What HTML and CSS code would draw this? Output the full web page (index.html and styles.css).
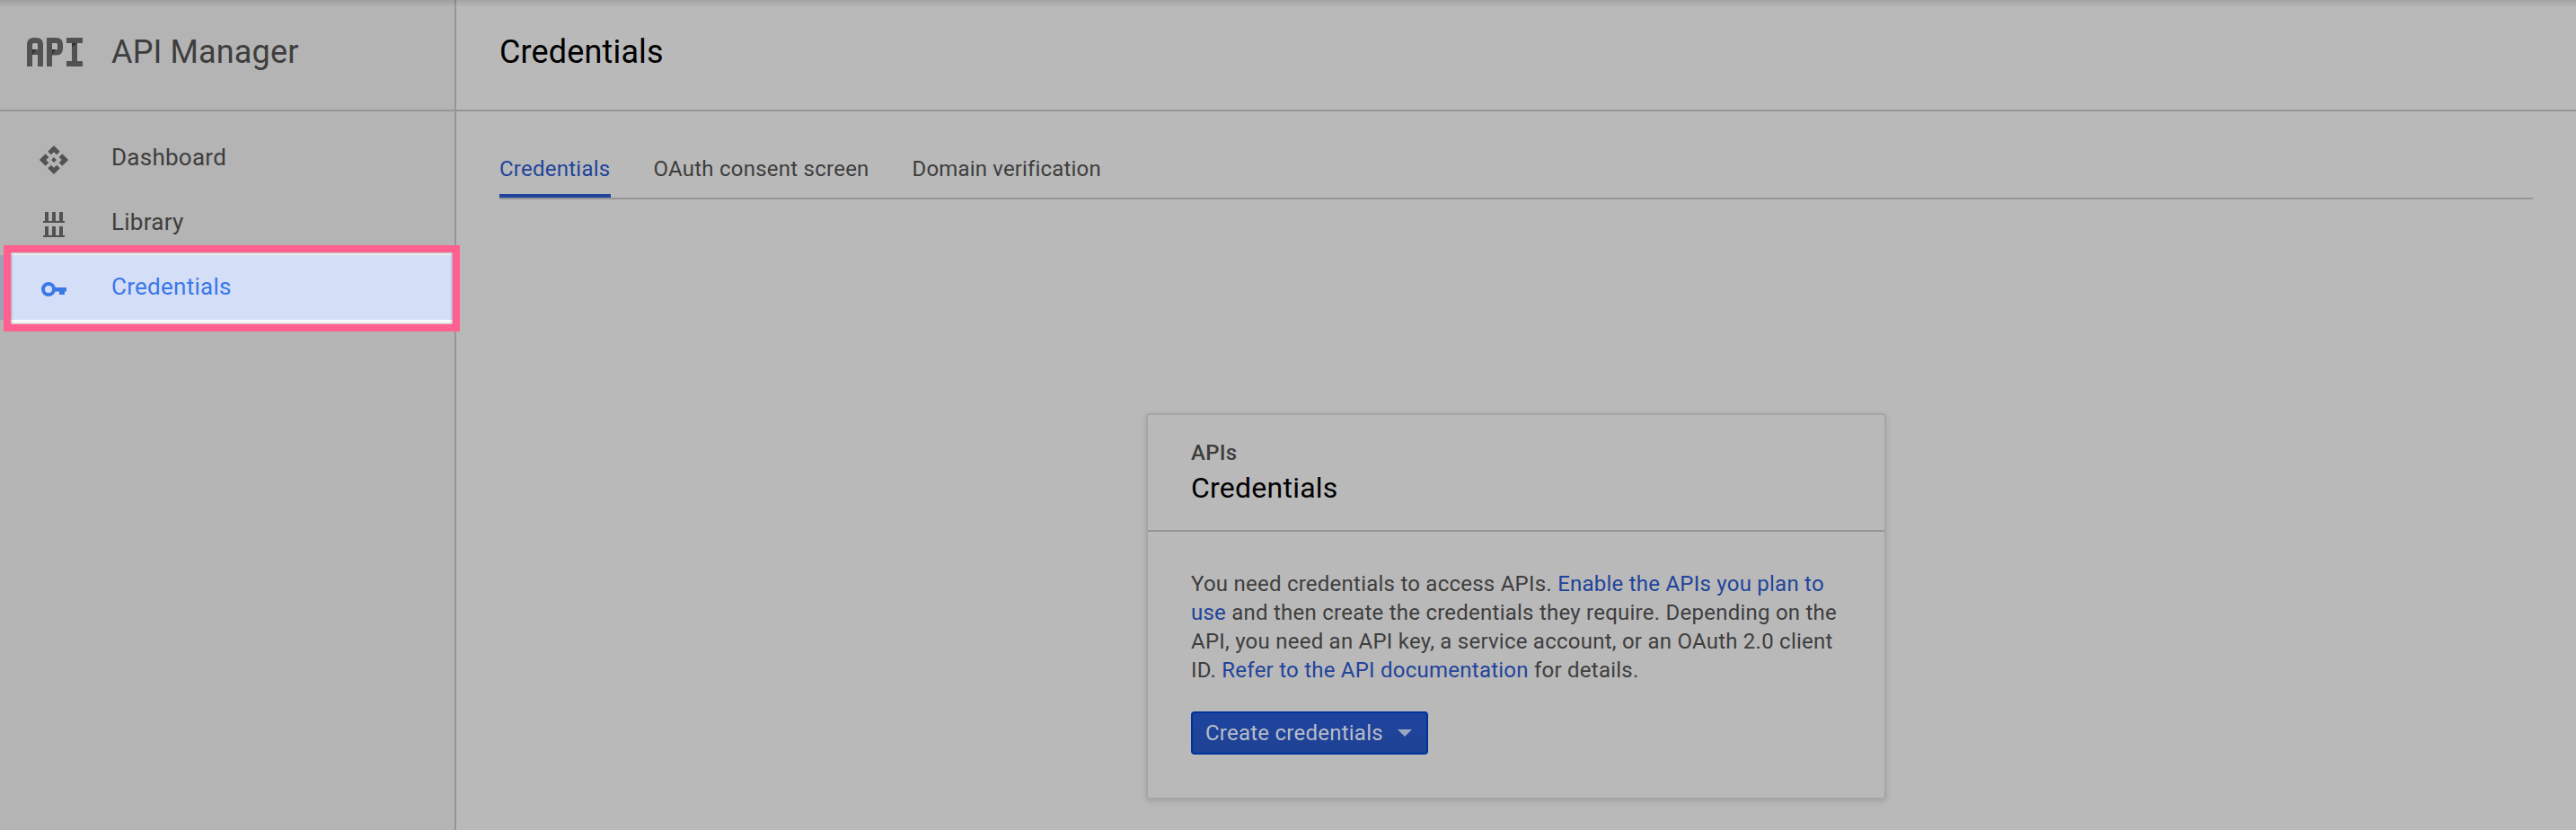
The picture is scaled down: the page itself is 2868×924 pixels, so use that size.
FILE: index.html
```html
<!DOCTYPE html>
<html lang="en">
<head>
<meta charset="utf-8">
<title>API Manager</title>
<link rel="stylesheet" href="styles.css">
</head>
<body>
<div class="app">
  <aside class="sidebar">
    <div class="brand">
      <svg class="brand-logo" width="64" height="34" viewBox="0 0 64 34" aria-hidden="true">
        <g fill="none" stroke="#525252" stroke-width="6">
          <path d="M4 33V8.500Q4 4 8.500 4H11.500Q16 4 16 8.500V33M4 17H16"/>
          <path d="M26 33V4H33.500Q38 4 38 8.500V13Q38 17.500 33.500 17.500H26"/>
          <path d="M45 4H63M54 4V30M45 30H63"/>
        </g>
        <path d="M7 14H11L7 20ZM29 14H33L29 20ZM51 7H57L51 11.500Z" fill="#303030"/>
      </svg>
      <span class="brand-name">API Manager</span>
    </div>
    <nav class="nav">
      <a class="nav-item">
        <svg class="nav-icon" width="36" height="36" viewBox="-.3 -.3 24.600 24.600" fill="#525252" aria-hidden="true">
          <path d="M14 12l-2 2-2-2 2-2zM12 6l2.120 2.120 2.500-2.500L12 1 7.380 5.620l2.500 2.500zM6 12l2.120-2.120-2.500-2.500L1 12l4.620 4.620 2.500-2.500zM18 12l-2.120 2.120 2.500 2.500L23 12l-4.620-4.620-2.500 2.500zM12 18l-2.120-2.120-2.500 2.500L12 23l4.620-4.620-2.500-2.500z"/>
        </svg>
        <span>Dashboard</span>
      </a>
      <a class="nav-item">
        <svg class="nav-icon" width="36" height="36" viewBox="0 0 36 36" fill="#525252" aria-hidden="true">
          <path d="M8 4h4v10h4V4h4v10h4V4h4v10h2v2H6v-2h2zM8 20h4v10h4V20h4v10h4V20h4v10h2v2H6v-2h2z"/>
        </svg>
        <span>Library</span>
      </a>
      <a class="nav-item active">
        <i class="spotlight"></i>
        <svg class="nav-icon" width="36" height="36" viewBox="0 0 36 36" aria-hidden="true">
          <circle cx="12" cy="18" r="6" fill="none" stroke="#3b78e7" stroke-width="4"/>
          <path d="M18.500 16H32v4.500h-2V24h-6v-3.500h-5.500z" fill="#3b78e7"/>
        </svg>
        <span>Credentials</span>
      </a>
    </nav>
  </aside>
  <main class="main">
    <header class="page-head"><h1>Credentials</h1></header>
    <div class="tabs">
      <a class="tab selected">Credentials</a>
      <a class="tab">OAuth consent screen</a>
      <a class="tab tight">Domain verification</a>
    </div>
    <section class="card">
      <div class="card-head">
        <div class="eyebrow">APIs</div>
        <h2>Credentials</h2>
      </div>
      <div class="card-body">
        <p>You need credentials to access APIs. <a>Enable the APIs you plan to<br>use</a> and then create the credentials they require. Depending on the<br>API, you need an API key, a service account, or an OAuth 2.0 client<br>ID. <a>Refer to the API documentation</a> for details.</p>
        <button class="create">Create credentials
          <svg width="16" height="8" viewBox="0 0 16 8" aria-hidden="true"><path d="M0 0h16L8 8z" fill="#9ba7c1"/></svg>
        </button>
      </div>
    </section>
  </main>
  <div class="top-shadow"></div>
</div>
</body>
</html>
```

FILE: styles.css
```css
* { box-sizing: border-box; }
body {
  margin: 0;
  font-family: Roboto, sans-serif;
  font-size: 24px;
  letter-spacing: .24px;
  color: #3e3e3e;
  background: #b9b9b9;
}
.app { position: relative; display: flex; height: 924px; overflow: hidden; }
.sidebar { width: 508px; flex: none; background: #b4b4b4; border-right: 2px solid #969696; }
.brand {
  height: 124px;
  padding: 37px 0 0 29px;
  display: flex;
  align-items: flex-start;
  border-bottom: 2px solid #969696;
}
.brand-logo { margin-top: 4px; }
.brand-name { margin-left: 31px; font-size: 36px; line-height: 42px; letter-spacing: .15px; }
.nav { padding-top: 16px; }
.nav-item {
  position: relative;
  height: 72px;
  display: flex;
  align-items: center;
  padding: 0 0 0 42px;
  font-size: 26px;
  line-height: 30px;
  letter-spacing: .26px;
}
.nav-icon { position: relative; margin-top: 4px; }
.nav-item span { position: relative; margin: -2px 0 0 46px; }
.active { background: #9aa1b3; color: #3b78e7; }
/* frame around the selected entry, painted over its row */
.spotlight {
  position: absolute;
  left: 4px;
  top: -11px;
  width: 508px;
  height: 96px;
  border: 8px solid #ff6090;
  background: linear-gradient(#f4f6f8 3px, #d4def7 3px, #d4def7 75px, #fafafa 75px);
}
.spotlight::after {
  content: "";
  position: absolute;
  inset: 0;
  box-shadow: inset 0 0 3px rgba(0, 0, 0, .5);
}
.main { flex: 1; display: flex; flex-direction: column; }
.page-head { height: 124px; padding: 37px 48px 0; border-bottom: 2px solid #969696; }
h1 { margin: 0; font-size: 36px; line-height: 42px; font-weight: 400; color: #000; letter-spacing: .15px; }
.tabs {
  display: flex;
  gap: 48px;
  height: 98px;
  margin: 0 48px;
  border-bottom: 2px solid #969696;
}
.tab { padding-top: 50px; line-height: 28px; }
.tight { letter-spacing: .16px; }
.selected { width: 124px; margin-right: -.5px; color: #1f449b; border-bottom: 4px solid #1f449b; }
.card {
  width: 824px;
  height: 430px;
  margin: 238px auto 0;
  border: 2px solid #a6a6a6;
  border-radius: 4px;
  box-shadow: 0 2px 6px rgba(0, 0, 0, .14);
}
.card-head { height: 130px; padding: 28px 48px 0; border-bottom: 2px solid #969696; }
.eyebrow { font-weight: 500; line-height: 28px; }
h2 { margin: 6px 0 0; font-size: 32px; line-height: 38px; font-weight: 400; color: #000; }
.card-body { padding: 42px 48px 0; }
p { margin: 0 0 30px; line-height: 32px; white-space: nowrap; }
p a { color: #1f449b; }
.create {
  display: flex;
  align-items: center;
  justify-content: space-between;
  width: 264px;
  height: 48px;
  padding: 0 16px 0 14px;
  border: 2px solid #003398;
  border-radius: 4px;
  background: linear-gradient(#1f449f, #1e4294);
  color: #b9bdc8;
  font: inherit;
  letter-spacing: inherit;
}
.top-shadow {
  position: absolute;
  inset: 0 0 auto 0;
  height: 8px;
  background: linear-gradient(rgba(0, 0, 0, .12), rgba(0, 0, 0, 0));
}
```
